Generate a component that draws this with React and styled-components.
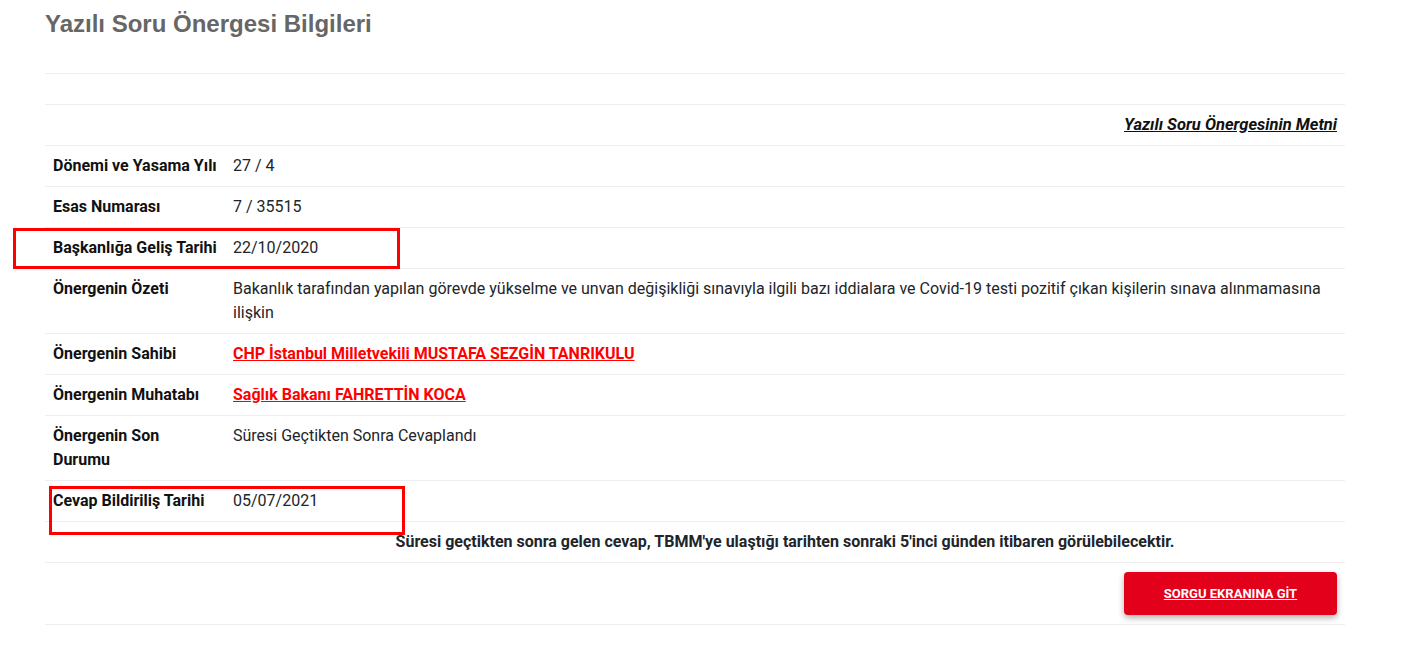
import React from 'react'
import styled, { createGlobalStyle } from 'styled-components'

const GlobalStyle = createGlobalStyle`
  html, body {
    margin: 0;
    padding: 0;
    background: #fff;
  }
  body {
    font-family: Roboto, "Noto Sans", sans-serif;
    color: #212529;
  }
`

const Page = styled.div`
  position: relative;
  padding: 9px 67px 20px 45px;
`

const Title = styled.h3`
  margin: 0 0 35px 0;
  font-family: "Liberation Sans", Arial, sans-serif;
  font-size: 24px;
  font-weight: bold;
  line-height: 29px;
  color: #666;
`

const Table = styled.div`
  border-bottom: 1px solid #eceef1;
`

const Row = styled.div`
  display: grid;
  grid-template-columns: 180px 1fr;
  border-top: 1px solid #eceef1;
  min-height: ${p => p.$height || 40}px;
`

const Label = styled.div`
  padding: 8px;
  font-size: 16px;
  font-weight: bold;
  line-height: 24px;
  color: #111;
`

const Value = styled.div`
  padding: 8px;
  font-size: 16px;
  line-height: 24px;
  color: #212529;
  text-align: ${p => p.$align || 'left'};
  font-weight: ${p => (p.$bold ? 'bold' : 'normal')};
`

const FullCell = styled.div`
  grid-column: 1 / span 2;
  padding: ${p => p.$pad || '8px'};
  display: flex;
  justify-content: flex-end;
  align-items: center;
`

const DocLink = styled.a`
  font-size: 16.5px;
  line-height: 24px;
  font-weight: bold;
  font-style: italic;
  color: #111;
  text-decoration: underline;
`

const RedLink = styled.a`
  color: #ff0000;
  font-weight: bold;
  text-decoration: underline;
`

const Button = styled.a`
  display: flex;
  align-items: center;
  justify-content: center;
  width: 213px;
  height: 43px;
  border-radius: 4px;
  background: #e3001b;
  color: #fff;
  font-size: 13px;
  font-weight: bold;
  text-decoration: underline;
  box-shadow: 0 3px 6px rgba(0, 0, 0, 0.3);
`

const Marker = styled.div`
  position: absolute;
  border: 3px solid #ff0000;
  box-sizing: border-box;
`

const App = () => {
  return (
    <Page>
      <GlobalStyle />
      <Title>Yazılı Soru Önergesi Bilgileri</Title>
      <Table>
        <Row $height={30} />
        <Row>
          <FullCell>
            <DocLink>Yazılı Soru Önergesinin Metni</DocLink>
          </FullCell>
        </Row>
        <Row>
          <Label>Dönemi ve Yasama Yılı</Label>
          <Value>27 / 4</Value>
        </Row>
        <Row>
          <Label>Esas Numarası</Label>
          <Value>7 / 35515</Value>
        </Row>
        <Row>
          <Label>Başkanlığa Geliş Tarihi</Label>
          <Value>22/10/2020</Value>
        </Row>
        <Row>
          <Label>Önergenin Özeti</Label>
          <Value>
            Bakanlık tarafından yapılan görevde yükselme ve unvan değişikliği sınavıyla ilgili bazı iddialara ve Covid-19 testi pozitif çıkan kişilerin sınava alınmamasına ilişkin
          </Value>
        </Row>
        <Row>
          <Label>Önergenin Sahibi</Label>
          <Value>
            <RedLink>CHP İstanbul Milletvekili MUSTAFA SEZGİN TANRIKULU</RedLink>
          </Value>
        </Row>
        <Row>
          <Label>Önergenin Muhatabı</Label>
          <Value>
            <RedLink>Sağlık Bakanı FAHRETTİN KOCA</RedLink>
          </Value>
        </Row>
        <Row>
          <Label>Önergenin Son Durumu</Label>
          <Value>Süresi Geçtikten Sonra Cevaplandı</Value>
        </Row>
        <Row>
          <Label>Cevap Bildiriliş Tarihi</Label>
          <Value>05/07/2021</Value>
        </Row>
        <Row>
          <Label />
          <Value $align="center" $bold>
            Süresi geçtikten sonra gelen cevap, TBMM'ye ulaştığı tarihten sonraki 5'inci günden itibaren görülebilecektir.
          </Value>
        </Row>
        <Row $height={61}>
          <FullCell $pad="9px 8px">
            <Button>SORGU EKRANINA GİT</Button>
          </FullCell>
        </Row>
      </Table>
      <Marker style={{ left: 13, top: 228, width: 387, height: 41 }} />
      <Marker style={{ left: 49, top: 486, width: 356, height: 49 }} />
    </Page>
  )
}

export default App
